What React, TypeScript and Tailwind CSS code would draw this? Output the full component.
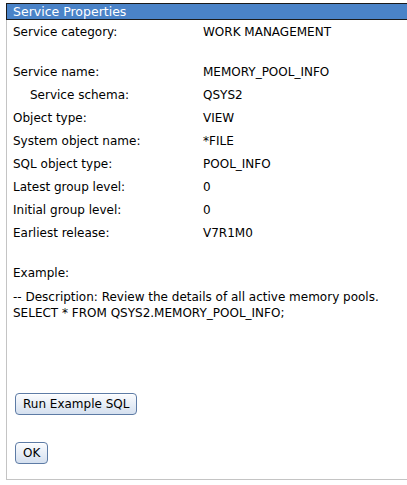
import React from "react";

const ROWS: { label: string; value: string; indent?: boolean }[] = [
  { label: "Service name:", value: "MEMORY_POOL_INFO" },
  { label: "Service schema:", value: "QSYS2", indent: true },
  { label: "Object type:", value: "VIEW" },
  { label: "System object name:", value: "*FILE" },
  { label: "SQL object type:", value: "POOL_INFO" },
  { label: "Latest group level:", value: "0" },
  { label: "Initial group level:", value: "0" },
  { label: "Earliest release:", value: "V7R1M0" },
];

function Row({ label, value, indent }: { label: string; value: string; indent?: boolean }) {
  return (
    <div className="flex h-[23px] items-center">
      <div className={indent ? "w-[190px] pl-[17px]" : "w-[190px]"}>{label}</div>
      <div>{value}</div>
    </div>
  );
}

function OldButton({ children }: { children: React.ReactNode }) {
  return (
    <button className="h-[22px] rounded-[4px] border border-[#5d7ba5] bg-gradient-to-b from-[#fbfcfe] to-[#d5e0ef] px-[7px] text-[12px] leading-none text-black shadow-[inset_0_1px_0_#fff]">
      {children}
    </button>
  );
}

export default function App() {
  return (
    <div className="h-[485px] w-[407px] bg-white pt-[3px] font-['DejaVu_Sans',Verdana,sans-serif] text-[12px] text-black">
      <div className="ml-[6px] h-[477px] border-b border-l border-[#c4c4c4]">
        <div className="-ml-px h-[17px] border-y border-l border-[#1a1a1a] bg-[#4a83c8] pl-[6px] text-[12.5px] leading-[15px] text-white">
          Service Properties
        </div>
        <div className="pl-[6px]">
          <Row label="Service category:" value="WORK MANAGEMENT" />
          <div className="h-[17px]" />
          {ROWS.map((r) => (
            <Row key={r.label} {...r} />
          ))}
          <div className="mt-[21px] leading-[16px]">Example:</div>
          <div className="mt-[8px] leading-[16px]">
            <div>-- Description: Review the details of all active memory pools.</div>
            <div>SELECT * FROM QSYS2.MEMORY_POOL_INFO;</div>
          </div>
          <div className="mt-[72px] pl-[2px]">
            <OldButton>Run Example SQL</OldButton>
          </div>
          <div className="mt-[27px] pl-[2px]">
            <OldButton>OK</OldButton>
          </div>
        </div>
      </div>
    </div>
  );
}
